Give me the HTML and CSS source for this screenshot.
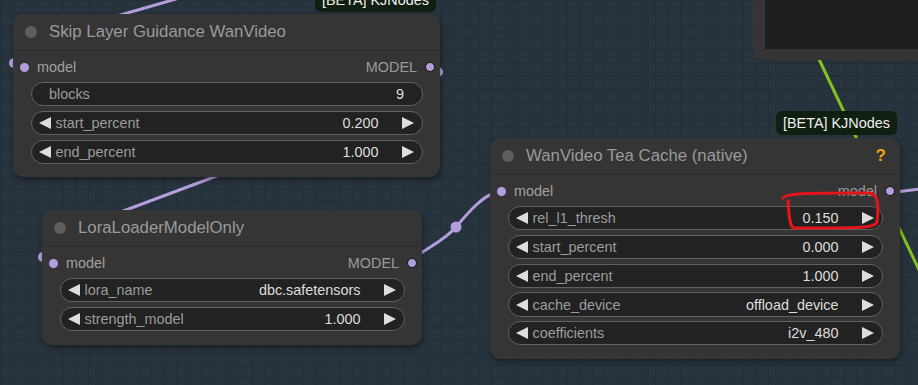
FILE: index.html
```html
<!DOCTYPE html>
<html>
<head>
    <title>WanVideo nodes</title>
    <link rel="stylesheet" href="styles.css">
</head>
<body>
    <div class="canvas">
        <svg class="wires" width="918" height="385" viewBox="0 0 918 385">
            <path class="wire" d="M 190 -5 L 110 18"/>
            <path class="wire" d="M 230 171 L 118 213"/>
            <circle class="wire-end" cx="14" cy="63" r="5"/>
            <circle class="wire-end" cx="43" cy="257" r="5"/>
            <circle class="wire-end" cx="438" cy="72" r="5"/>
            <path class="wire" d="M 414 258 C 430 246, 445 240, 456 227 C 468 213, 480 198, 496 192"/>
            <circle class="wire-knot" cx="456" cy="227" r="5.5"/>
            <path class="wire" d="M 896 192 L 920 189"/>
            <path class="wire wire-green" d="M 817 55 L 920 272"/>
        </svg>

        <div class="preview"><div class="preview-screen"></div></div>

        <!-- Skip Layer Guidance -->
        <div class="node node-skip">
            <div class="node-title"><span class="title-dot"></span>Skip Layer Guidance WanVideo</div>
            <div class="node-body">
                <div class="slots">
                    <span class="slot-in"></span><span class="slot-name">model</span>
                    <span class="slot-out-name">MODEL</span><span class="slot-out"></span>
                </div>
                <div class="widget widget-plain"><span class="w-label">blocks</span><span class="w-value">9</span></div>
                <div class="widget"><span class="arrow-l"></span><span class="w-label">start_percent</span><span class="w-value">0.200</span><span class="arrow-r"></span></div>
                <div class="widget"><span class="arrow-l"></span><span class="w-label">end_percent</span><span class="w-value">1.000</span><span class="arrow-r"></span></div>
            </div>
        </div>

        <!-- Lora loader -->
        <div class="node node-lora">
            <div class="node-title"><span class="title-dot"></span>LoraLoaderModelOnly</div>
            <div class="node-body">
                <div class="slots">
                    <span class="slot-in"></span><span class="slot-name">model</span>
                    <span class="slot-out-name">MODEL</span><span class="slot-out"></span>
                </div>
                <div class="widget"><span class="arrow-l"></span><span class="w-label">lora_name</span><span class="w-value">dbc.safetensors</span><span class="arrow-r"></span></div>
                <div class="widget"><span class="arrow-l"></span><span class="w-label">strength_model</span><span class="w-value">1.000</span><span class="arrow-r"></span></div>
            </div>
        </div>

        <!-- Tea cache -->
        <div class="node node-tea">
            <div class="node-title"><span class="title-dot"></span>WanVideo Tea Cache (native)<span class="help">?</span></div>
            <div class="node-body">
                <div class="slots">
                    <span class="slot-in"></span><span class="slot-name">model</span>
                    <span class="slot-out-name">model</span><span class="slot-out"></span>
                </div>
                <div class="widget"><span class="arrow-l"></span><span class="w-label">rel_l1_thresh</span><span class="w-value">0.150</span><span class="arrow-r"></span></div>
                <div class="widget"><span class="arrow-l"></span><span class="w-label">start_percent</span><span class="w-value">0.000</span><span class="arrow-r"></span></div>
                <div class="widget"><span class="arrow-l"></span><span class="w-label">end_percent</span><span class="w-value">1.000</span><span class="arrow-r"></span></div>
                <div class="widget"><span class="arrow-l"></span><span class="w-label">cache_device</span><span class="w-value">offload_device</span><span class="arrow-r"></span></div>
                <div class="widget"><span class="arrow-l"></span><span class="w-label">coefficients</span><span class="w-value">i2v_480</span><span class="arrow-r"></span></div>
            </div>
        </div>

        <div class="tip tip-top">[BETA] KJNodes</div>
        <div class="tip tip-tea">[BETA] KJNodes</div>

        <svg class="marks" width="918" height="385" viewBox="0 0 918 385">
            <path d="M 783 198 C 786 192, 830 193, 870 193 C 878 194, 879 206, 877 222 C 875 229, 850 228, 794 228 C 789 226, 789 214, 788 201"/>
        </svg>
    </div>
</body>
</html>
```

FILE: styles.css
```css
body {
    margin: 0;
    background: #26323c;
    font-family: "Liberation Sans", Arial, sans-serif;
}
.canvas {
    position: relative;
    width: 918px;
    height: 385px;
    overflow: hidden;
    background-color: #27333d;
    background-image:
        linear-gradient(#222d37 1px, transparent 1px),
        linear-gradient(90deg, #222d37 1px, transparent 1px);
    background-size: 12.6px 12.6px;
}
.wires, .marks {
    position: absolute;
    left: 0;
    top: 0;
}
.marks {
    pointer-events: none;
}
.marks path {
    fill: none;
    stroke: #e3151a;
    stroke-width: 3;
    stroke-linecap: round;
    stroke-linejoin: round;
}
.wire {
    fill: none;
    stroke: #b39ddb;
    stroke-width: 3;
}
.wire-green {
    stroke: #84c11d;
}
.wire-end, .wire-knot {
    fill: #b39ddb;
}

.preview {
    position: absolute;
    left: 753px;
    top: -20px;
    width: 190px;
    height: 80px;
    box-sizing: border-box;
    padding: 0 0 11px 12px;
    background: #353535;
    border-radius: 10px;
}
.preview-screen {
    height: 100%;
    background: #1e1f20;
}

.node {
    position: absolute;
    background: #353535;
    border-radius: 10px;
    box-shadow: 1px 3px 5px rgba(0, 0, 0, 0.35);
    color: #999;
}
.node-skip { left: 13px; top: 14px; width: 427px; }
.node-lora { left: 42px; top: 210px; width: 380px; }
.node-tea { left: 490px; top: 138px; width: 410px; }

.node-title {
    height: 36px;
    display: flex;
    align-items: center;
    padding-left: 11.5px;
    border-bottom: 1px solid #2b2b2b;
    font-size: 16.8px;
    color: #9a9a9a;
}
.title-dot {
    width: 12px;
    height: 12px;
    border-radius: 50%;
    background: #5e5e5e;
    margin-right: 12.5px;
}
.help {
    margin-left: auto;
    margin-right: 14px;
    color: #f2a20c;
    font-weight: bold;
    font-size: 17px;
}

.node-body {
    padding: 4px 17.5px 13.5px;
}
.slots {
    height: 24px;
    display: flex;
    align-items: center;
    margin: 0 -12px 3px -11px;
    font-size: 14.4px;
}
.slot-in {
    width: 9px;
    height: 9px;
    border-radius: 50%;
    background: #b39ddb;
    margin-right: 8.5px;
}
.slot-name {
    color: #a0a0a0;
}
.slot-out-name {
    margin-left: auto;
    margin-right: 7.5px;
    color: #9a9a9a;
}
.slot-out {
    width: 8px;
    height: 8px;
    border-radius: 50%;
    background: #b39ddb;
    border: 1.5px solid #111;
}

.widget {
    height: 24.3px;
    box-sizing: border-box;
    display: flex;
    align-items: center;
    padding: 0 8px 0 7.3px;
    margin-top: 4.5px;
    background: #222;
    border: 1px solid #616161;
    border-radius: 13px;
    font-size: 14.4px;
}
.slots + .widget {
    margin-top: 0;
}
.widget-plain {
    padding: 0 17.5px 0 17.5px;
}
.w-label {
    color: #9c9c9c;
}
.arrow-l + .w-label {
    margin-left: 4.7px;
}
.w-value {
    margin-left: auto;
    color: #ddd;
}
.arrow-l, .arrow-r {
    width: 0;
    height: 0;
    border-top: 6px solid transparent;
    border-bottom: 6px solid transparent;
}
.arrow-l {
    border-right: 12px solid #ddd;
}
.arrow-r {
    border-left: 12px solid #ddd;
    margin-left: 23px;
}

.tip {
    position: absolute;
    height: 24px;
    line-height: 24px;
    padding: 0 7px;
    background: #0f1f10;
    color: #f0f0f0;
    font-size: 14.4px;
    border-radius: 6px;
}
.tip-top { left: 315px; top: -12px; }
.tip-tea { left: 776px; top: 111px; }
```
